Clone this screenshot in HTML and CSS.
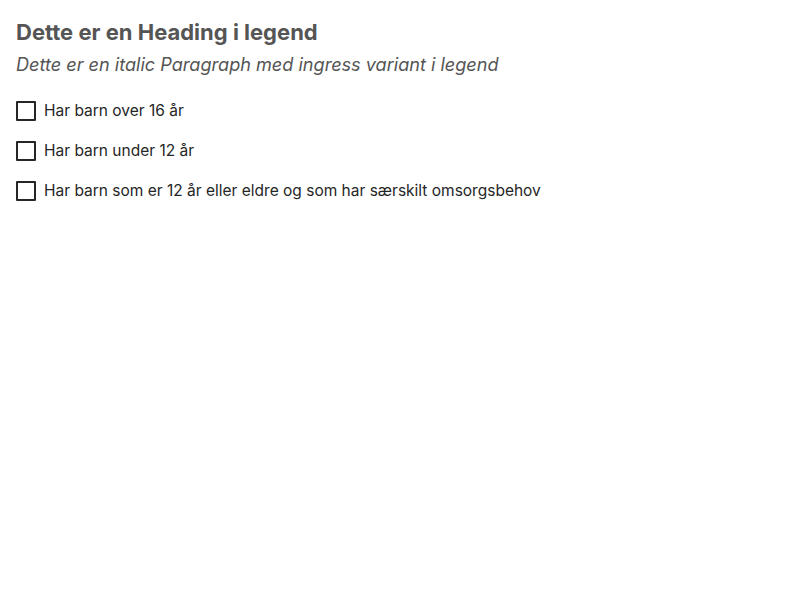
FILE: index.html
```html
<!DOCTYPE html>
<html lang="no">
<head>
<meta charset="utf-8">
<link rel="stylesheet" href="styles.css">
</head>
<body>
<div class="page">
<fieldset class="group">
  <legend class="legend">
    <span class="heading">Dette er en Heading i legend</span>
    <span class="ingress">Dette er en italic Paragraph med ingress variant i legend</span>
  </legend>
  <div class="options">
    <label class="option"><span class="box"></span><span class="label">Har barn over 16 år</span></label>
    <label class="option"><span class="box"></span><span class="label">Har barn under 12 år</span></label>
    <label class="option"><span class="box"></span><span class="label">Har barn som er 12 år eller eldre og som har særskilt omsorgsbehov</span></label>
  </div>
</fieldset>
</div>
</body>
</html>
```
FILE: styles.css
```css
html, body {
  margin: 0;
  padding: 0;
  background: #fff;
}
body {
  font-family: Inter, "Noto Sans", sans-serif;
  color: #262626;
}
.page {
  padding: 18px 16px;
}
.group {
  border: 0;
  margin: 0;
  padding: 0;
  min-width: 0;
}
.legend {
  padding: 0;
  display: block;
}
.heading {
  display: block;
  font-size: 22px;
  font-weight: 700;
  line-height: 28px;
  color: #555;
}
.ingress {
  display: block;
  font-size: 18.1px;
  font-style: italic;
  line-height: 28px;
  color: #555;
  margin-top: 4px;
}
.options {
  display: flex;
  flex-direction: column;
  gap: 16px;
  margin-top: 21px;
}
.option {
  display: flex;
  align-items: center;
  gap: 8px;
  height: 24px;
}
.box {
  width: 20px;
  height: 20px;
  box-sizing: border-box;
  border: 2px solid #262626;
  border-radius: 1px;
  flex: none;
}
.label {
  font-size: 15.5px;
  line-height: 24px;
}
```
